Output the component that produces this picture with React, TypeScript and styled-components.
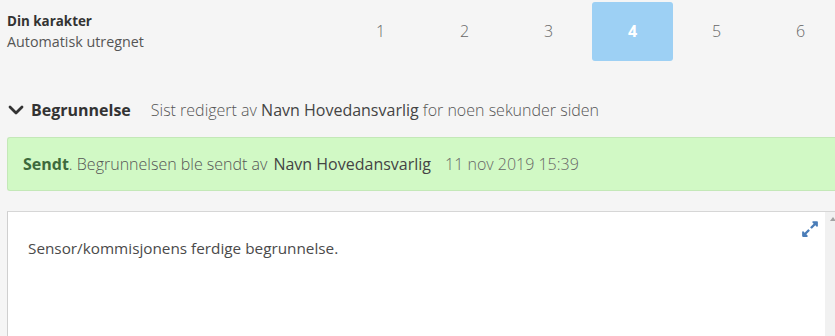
import * as React from "react";
import styled, { createGlobalStyle } from "styled-components";
import { FaExpandAlt } from "react-icons/fa";

const GlobalStyle = createGlobalStyle`
    html, body {
        margin: 0;
        padding: 0;
        background: #f5f5f5;
        overflow: hidden;
    }
    body {
        font-family: "Open Sans", "Noto Sans", sans-serif;
        color: #333;
    }
`;

const Page = styled.div`
    width: 835px;
    height: 336px;
    padding-left: 7px;
    box-sizing: border-box;
    overflow: hidden;
`;

const Header = styled.div`
    display: flex;
    height: 63px;
`;

const GradeInfo = styled.div`
    width: 333px;
    flex-shrink: 0;
    padding-top: 11px;
`;

const GradeTitle = styled.div`
    font-size: 13.4px;
    font-weight: 700;
    line-height: 20px;
    color: #333;
`;

const GradeSub = styled.div`
    font-size: 14.3px;
    line-height: 22px;
    color: #555;
`;

const GradeList = styled.div`
    display: flex;
    gap: 3px;
    padding-top: 2px;
    flex-shrink: 0;
`;

const Grade = styled.div<{ selected: boolean }>`
    width: 81px;
    height: 59px;
    flex-shrink: 0;
    border-radius: 3px;
    display: flex;
    align-items: center;
    justify-content: center;
    font-size: 16px;
    font-weight: ${props => props.selected ? 700 : 300};
    color: ${props => props.selected ? "#fff" : "#666"};
    background: ${props => props.selected ? "#9dd0f4" : "transparent"};
    padding-bottom: 2px;
    box-sizing: border-box;
`;

const SectionRow = styled.div`
    display: flex;
    align-items: center;
    height: 30px;
    margin-top: 32px;
    padding-left: 1px;
`;

const Chevron = styled.svg`
    width: 16px;
    height: 10px;
    margin-right: 7px;
`;

const SectionTitle = styled.span`
    font-size: 16px;
    font-weight: 700;
    color: #333;
    margin-right: 20px;
`;

const Meta = styled.span`
    font-size: 16px;
    font-weight: 300;
    color: #555;
`;

const MetaName = styled.span`
    font-weight: 400;
    color: #444;
`;

const Banner = styled.div`
    margin-top: 12px;
    height: 54px;
    box-sizing: border-box;
    background: #d1f9c5;
    border: 1px solid #c4e8b8;
    border-right: none;
    border-radius: 3px 0 0 3px;
    display: flex;
    align-items: center;
    padding-left: 15px;
    font-size: 16px;
    font-weight: 300;
    color: #555;
`;

const Strong = styled.span`
    font-weight: 700;
    color: #3d6a3d;
`;

const BannerName = styled.span`
    font-weight: 400;
    color: #444;
    margin: 0 14px 0 6px;
`;

const BannerDate = styled.span`
    font-weight: 300;
    color: #666;
`;

const Editor = styled.div`
    margin-top: 20px;
    height: 130px;
    background: #fff;
    border-top: 1px solid #d6d6d6;
    border-left: 1px solid #cfcfcf;
    display: flex;
`;

const EditorBody = styled.div`
    position: relative;
    flex: 1;
    padding: 25px 0 0 20px;
    font-size: 15.3px;
    font-weight: 400;
    line-height: 22px;
    color: #4a4a4a;
`;

const ExpandButton = styled.span`
    position: absolute;
    top: 8px;
    right: 6px;
    color: #4a7db8;
    display: flex;
`;

const Scrollbar = styled.div`
    width: 10px;
    background: #f1f1f1;
    display: flex;
    justify-content: center;
    padding-top: 5px;
`;

const ScrollArrow = styled.div`
    width: 0;
    height: 0;
    border-left: 3px solid transparent;
    border-right: 3px solid transparent;
    border-bottom: 4px solid #a3a3a3;
    margin-left: 6px;
`;

const grades = [1, 2, 3, 4, 5, 6];

const App = () => {
    const selected = 4;
    return (
        <Page>
            <GlobalStyle />
            <Header>
                <GradeInfo>
                    <GradeTitle>Din karakter</GradeTitle>
                    <GradeSub>Automatisk utregnet</GradeSub>
                </GradeInfo>
                <GradeList>
                    {grades.map(g => (
                        <Grade key={g} selected={g === selected}>{g}</Grade>
                    ))}
                </GradeList>
            </Header>
            <SectionRow>
                <Chevron viewBox="0 0 16 10">
                    <path d="M2 2 L8 8 L14 2" fill="none" stroke="#333" strokeWidth="2.8" strokeLinecap="round" strokeLinejoin="round" />
                </Chevron>
                <SectionTitle>Begrunnelse</SectionTitle>
                <Meta>
                    Sist redigert av <MetaName>Navn Hovedansvarlig</MetaName> for noen sekunder siden
                </Meta>
            </SectionRow>
            <Banner>
                <Strong>Sendt</Strong>. Begrunnelsen ble sendt av
                <BannerName>Navn Hovedansvarlig</BannerName>
                <BannerDate>11 nov 2019 15:39</BannerDate>
            </Banner>
            <Editor>
                <EditorBody>
                    Sensor/kommisjonens ferdige begrunnelse.
                    <ExpandButton><FaExpandAlt size={18} /></ExpandButton>
                </EditorBody>
                <Scrollbar>
                    <ScrollArrow />
                </Scrollbar>
            </Editor>
        </Page>
    );
};

export default App;
